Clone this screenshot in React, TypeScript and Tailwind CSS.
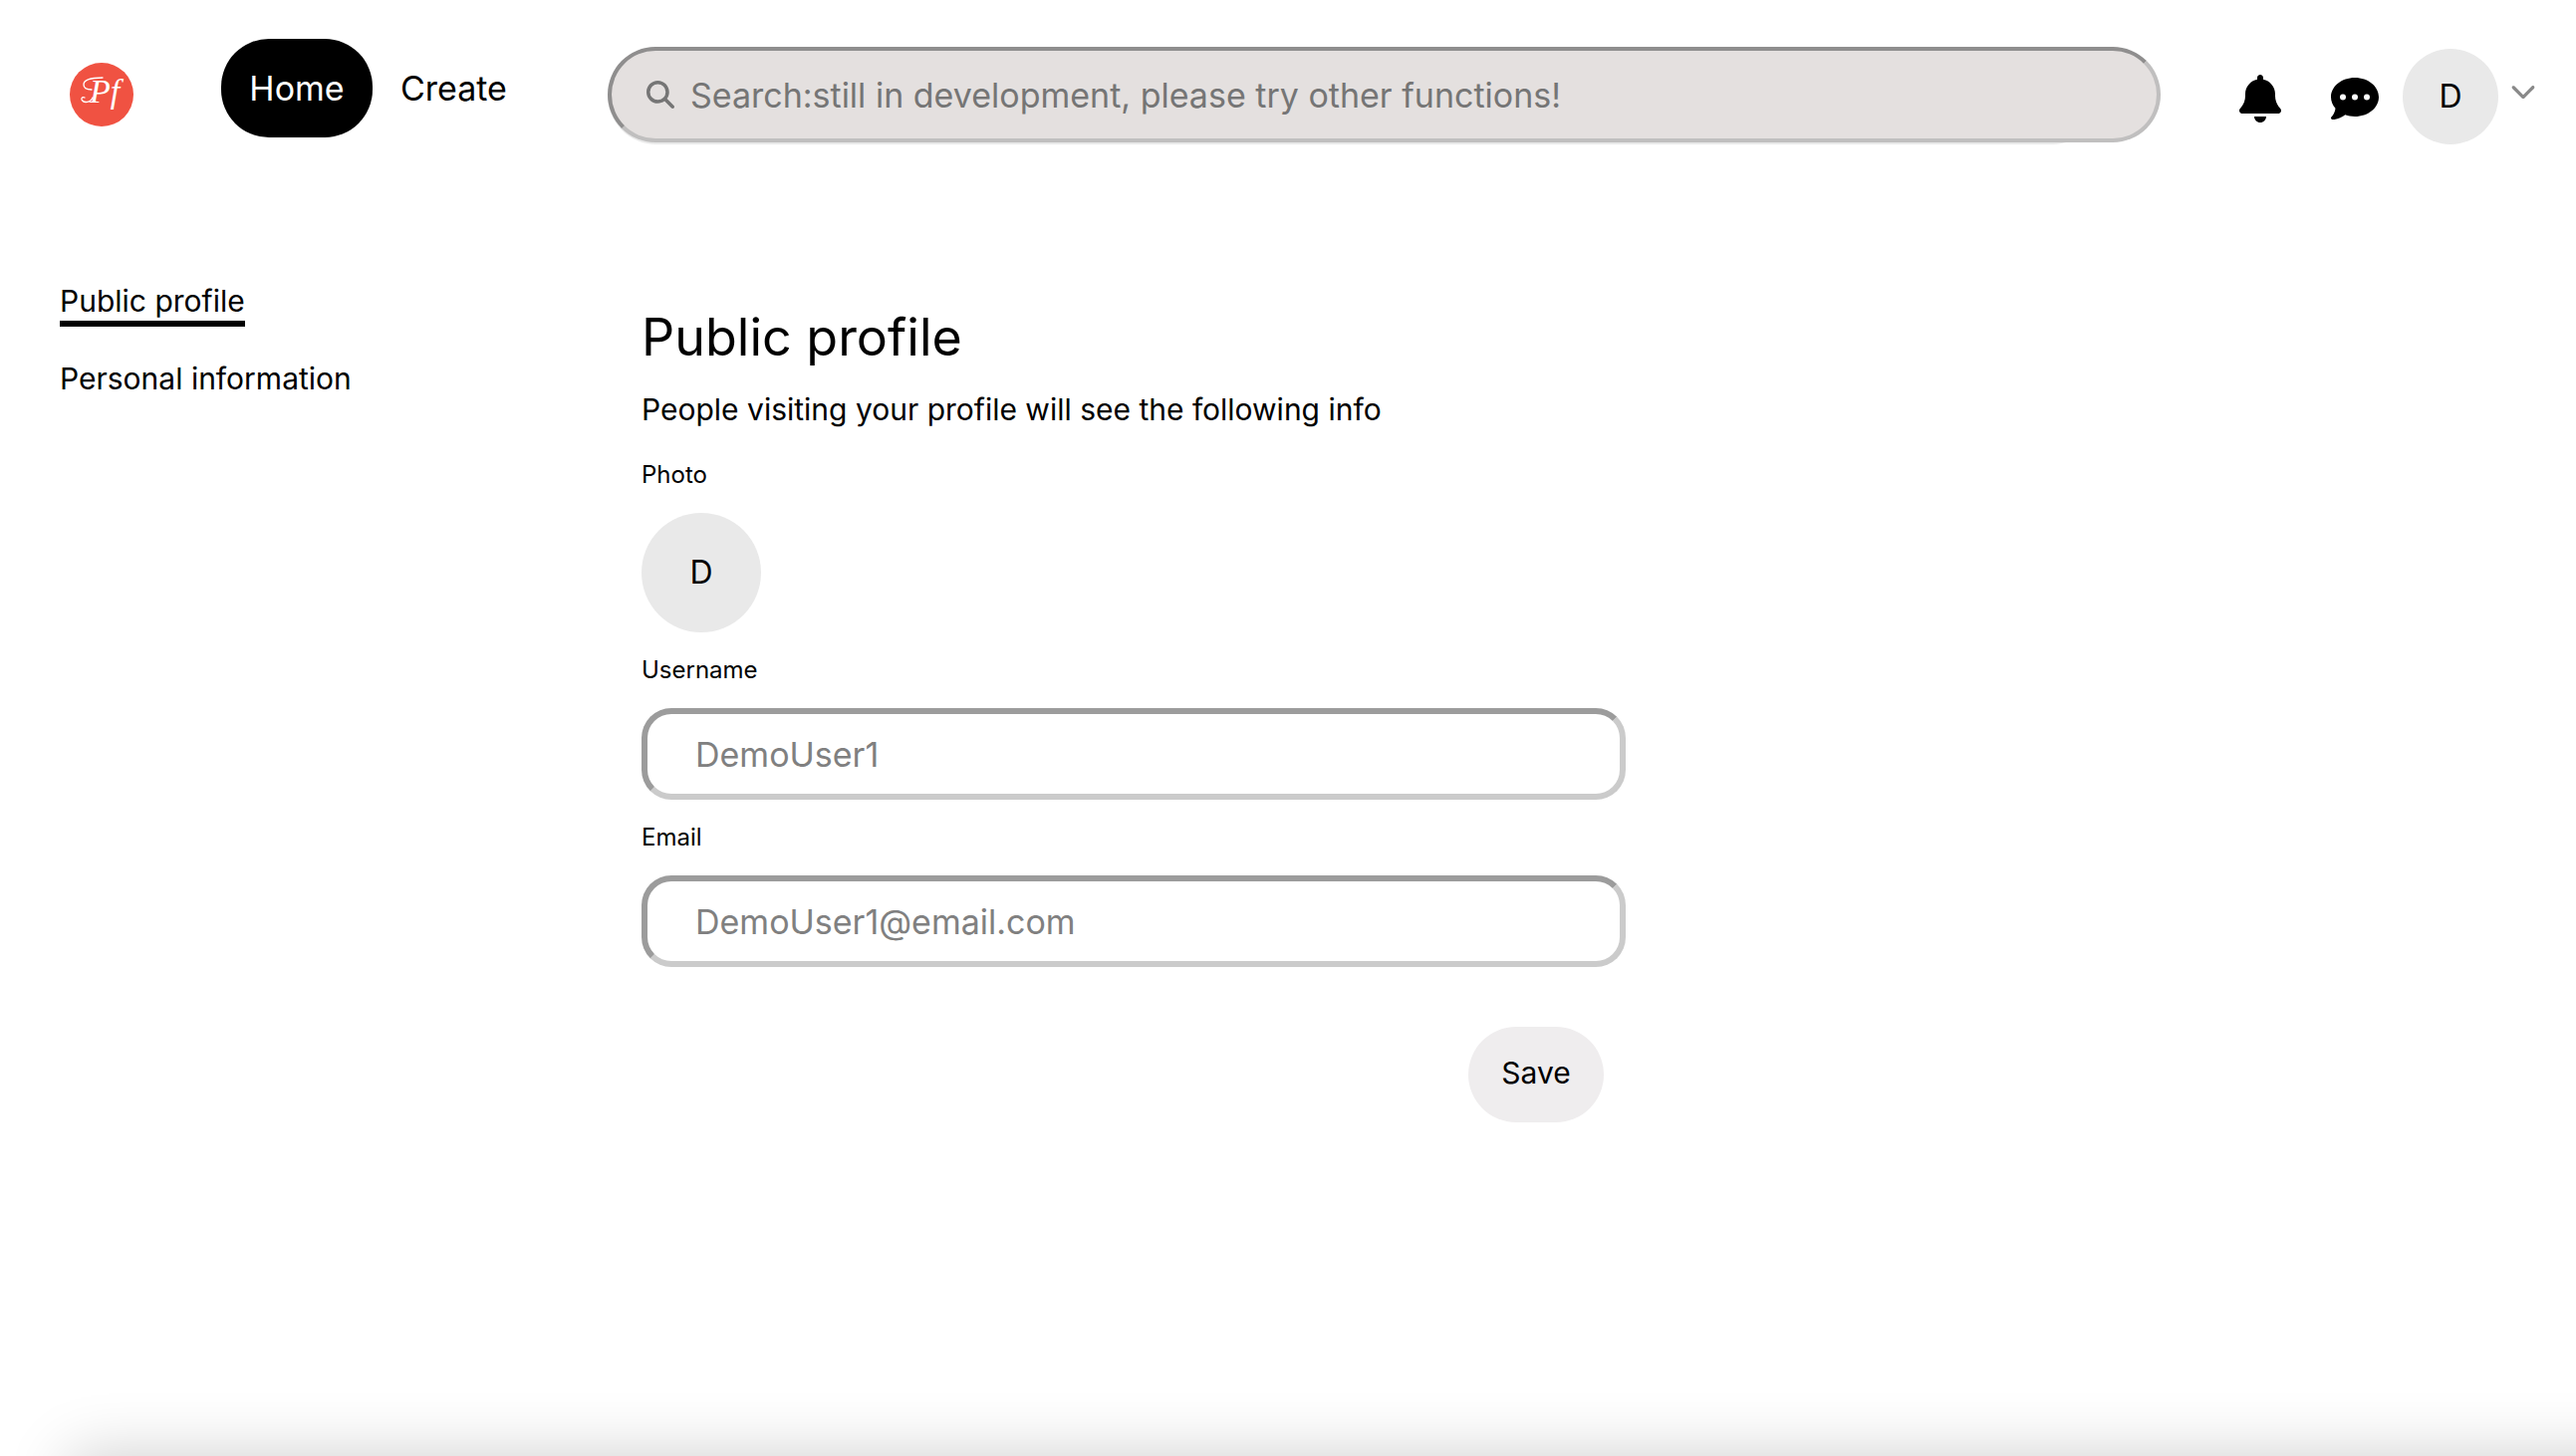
import React from "react";
import { FaBell, FaChevronDown, FaCommentDots, FaMagnifyingGlass } from "react-icons/fa6";

function Logo() {
  return (
    <a href="#" aria-label="Pf home" className="mt-6 shrink-0">
      <svg viewBox="0 0 64 64" className="block size-16">
        <circle cx="32" cy="32" r="32" fill="#f05242" />
        <path
          d="M22 27c-5 0-8-2-8-5 0-5 9-7 19-7M23 35c-2 5-9 6-11 2-.6-2 1.500-3 3-2"
          fill="none"
          stroke="#fff"
          strokeWidth="1.3"
          strokeLinecap="round"
        />
        <text
          x="20"
          y="40"
          fill="#fff"
          fontFamily='"Liberation Serif", serif'
          fontStyle="italic"
          fontSize="34"
        >
          Pf
        </text>
      </svg>
    </a>
  );
}

function Avatar({ className }: { className: string }) {
  return (
    <span className={`flex shrink-0 items-center justify-center rounded-full bg-[#e9e9e9] text-[32px] ${className}`}>
      D
    </span>
  );
}

function Header() {
  return (
    <header className="flex items-start pl-[70px] pr-10 pt-[39px]">
      <Logo />
      <nav className="ml-[88px] flex shrink-0 items-center text-[34px]">
        <a href="#" className="flex h-[99px] w-[152px] items-center justify-center rounded-[48px] bg-black text-white">
          Home
        </a>
        <a href="#" className="ml-7">
          Create
        </a>
      </nav>
      <div className="ml-[101px] mr-[60px] mt-2 min-w-0 flex-1 rounded-full bg-[#e9e9e9] pb-0.5">
        <label className="-mr-[60px] flex h-24 items-center gap-4 rounded-full border-4 border-b-[#c0bfbf] border-l-[#8f8e8e] border-r-[#c0bfbf] border-t-[#8f8e8e] bg-[#e4e0df] px-[35px] text-[#757575]">
          <FaMagnifyingGlass className="size-7 shrink-0" aria-hidden />
          <input
            type="search"
            aria-label="Search"
            placeholder="Search:still in development, please try other functions!"
            className="min-w-0 flex-1 bg-transparent text-[34px] outline-none placeholder:text-[#757575]"
          />
        </label>
      </div>
      <div className="ml-[76px] mt-[10px] flex h-24 shrink-0 items-center">
        <button type="button" aria-label="Notifications" className="pt-1">
          <FaBell className="size-12" />
        </button>
        <button type="button" aria-label="Messages" className="ml-[47px] pt-1">
          <FaCommentDots className="size-12" />
        </button>
        <Avatar className="ml-6 size-24" />
        <button type="button" aria-label="Account menu" className="ml-3 pb-3 text-[#8a8a8a]">
          <FaChevronDown className="size-[26px]" />
        </button>
      </div>
    </header>
  );
}

function Field({ id, label, type, placeholder }: { id: string; label: string; type: string; placeholder: string }) {
  return (
    <div className="mt-6">
      <label htmlFor={id} className="block text-2xl leading-7">
        {label}
      </label>
      <input
        id={id}
        type={type}
        placeholder={placeholder}
        className="mt-6 block h-[92px] w-full rounded-[30px] border-6 border-b-[#cbcbcb] border-l-[#9c9c9c] border-r-[#cbcbcb] border-t-[#9c9c9c] bg-white px-12 text-[34px] outline-none placeholder:text-[#808080]"
      />
    </div>
  );
}

export default function App() {
  return (
    <div className="flex min-h-screen flex-col overflow-hidden bg-white font-['Inter',sans-serif] text-black">
      <Header />
      <div className="flex flex-1 items-start">
        <nav className="ml-[60px] mt-[137px] flex w-[584px] shrink-0 flex-col items-start text-[30px] leading-10">
          <a href="#" className="border-b-6 border-black">
            Public profile
          </a>
          <a href="#" className="mt-8">
            Personal information
          </a>
        </nav>
        <main className="mt-[158px] w-full max-w-[988px]">
          <h1 className="text-[52px] leading-[72px]">Public profile</h1>
          <p className="mt-4 text-[30px] leading-10">People visiting your profile will see the following info</p>
          <p className="mt-8 text-2xl leading-7">Photo</p>
          <Avatar className="mt-6 size-[120px]" />
          <form>
            <Field id="username" label="Username" type="text" placeholder="DemoUser1" />
            <Field id="email" label="Email" type="email" placeholder="DemoUser1@email.com" />
            <div className="mr-[22px] mt-[60px] flex justify-end">
              <button type="button" className="h-24 w-[136px] rounded-full bg-[#efedee] pb-1 text-[30px]">
                Save
              </button>
            </div>
          </form>
        </main>
      </div>
      <div className="-mr-40 ml-[170px] h-0 shadow-[0_100px_60px_100px_rgba(0,0,0,0.2)]" />
    </div>
  );
}
